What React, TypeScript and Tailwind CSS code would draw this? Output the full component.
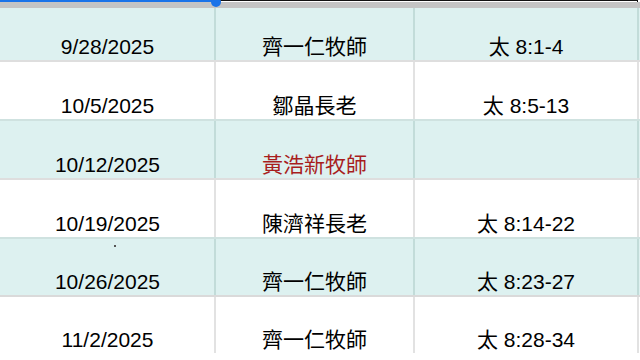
import React from "react";

type Row = { date: string; name: string; verse: string; teal: boolean; red?: boolean; h: string; bb: string };

const rows: Row[] = [
  { date: "9/28/2025", name: "齊一仁牧師", verse: "太 8:1-4", teal: true, h: "h-[54px]", bb: "border-[#dedede]" },
  { date: "10/5/2025", name: "鄒晶長老", verse: "太 8:5-13", teal: false, h: "h-[59px]", bb: "border-[#cfe2e0]" },
  { date: "10/12/2025", name: "黃浩新牧師", verse: "", teal: true, red: true, h: "h-[59px]", bb: "border-[#dedede]" },
  { date: "10/19/2025", name: "陳濟祥長老", verse: "太 8:14-22", teal: false, h: "h-[59px]", bb: "border-[#cfe2e0]" },
  { date: "10/26/2025", name: "齊一仁牧師", verse: "太 8:23-27", teal: true, h: "h-[58px]", bb: "border-[#dadada]" },
  { date: "11/2/2025", name: "齊一仁牧師", verse: "太 8:28-34", teal: false, h: "h-[58px]", bb: "border-transparent" },
];

const font = { fontFamily: '"Liberation Sans", "Noto Sans CJK TC", Arial, sans-serif' };

export default function App() {
  return (
    <div className="w-[640px] h-[360px] overflow-hidden bg-white relative" style={font}>
      {/* top selection strip */}
      <div className="relative flex flex-col h-[8px]">
        <div className="flex h-[2px] bg-white">
          <div className="w-[216px] h-[2px] bg-[#1a73e8]" />
          <div className="w-[197px] h-[1px] bg-[#111]" />
          <div className="w-[224px] h-[1px] bg-[#111] border-l border-[#111]" />
          <div className="w-[1px] h-[2px] bg-[#111]" />
        </div>
        <div className="flex-1 bg-[#c4c4c4]" />
        <div className="absolute left-[211px] top-[-3px] h-[10px] w-[10px] rounded-full bg-[#1a73e8]" />
      </div>
      {rows.map((r, i) => {
        const vb = r.teal ? "border-[#c2dcd9]" : "border-[#e2e2e2]";
        return (
          <div
            key={i}
            className={`flex ${r.h} border-b-2 ${r.bb} ${r.teal ? "bg-[#ddf1f0]" : "bg-white"} text-[21px] leading-6 text-black`}
          >
            <div className={`relative w-[216px] shrink-0 border-r-2 ${vb} flex items-end justify-center pb-[1px]`}>
              <span className="pl-[1px]">{r.date}</span>
              {i === 4 && <span className="absolute left-[114px] top-[6px] h-[2px] w-[2px] bg-[#555]" />}
            </div>
            <div className={`w-[199px] shrink-0 border-r-2 ${vb} flex items-end justify-center pb-[1px]`}>
              <span className={r.red ? "text-[#a81e1e]" : ""}>{r.name}</span>
            </div>
            <div className={`w-[224px] shrink-0 border-r-2 ${vb} flex items-end justify-center pb-[1px]`}>
              <span>{r.verse}</span>
            </div>
            <div className="flex-1" />
          </div>
        );
      })}
    </div>
  );
}
